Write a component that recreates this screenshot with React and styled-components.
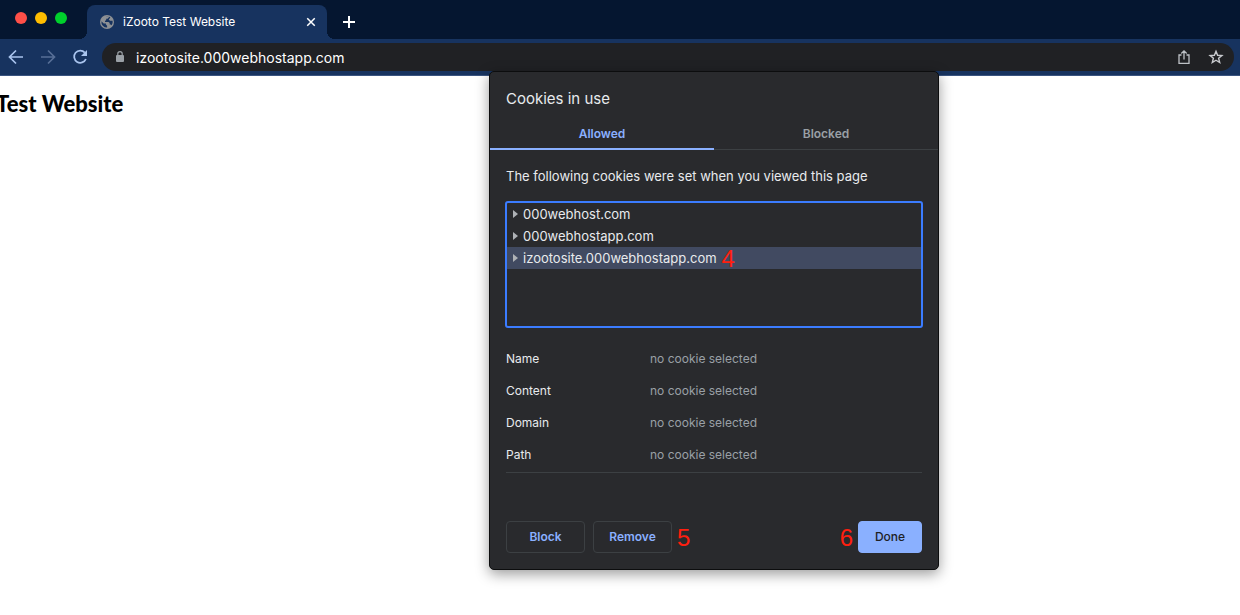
import React, { useState } from 'react';
import styled, { createGlobalStyle } from 'styled-components';

const GlobalStyle = createGlobalStyle`
  * {
    box-sizing: border-box;
  }
  body {
    margin: 0;
    background: #fff;
    font-family: Inter, 'Liberation Sans', sans-serif;
    overflow-x: hidden;
  }
  button,
  input {
    font-family: inherit;
  }
`;

const Browser = styled.div`
  position: relative;
  min-height: 100vh;
`;

const TabStrip = styled.header`
  display: flex;
  align-items: flex-end;
  height: 39px;
  background: #051630;
`;

const WindowButtons = styled.div`
  display: flex;
  align-self: flex-start;
  gap: 8px;
  width: 87px;
  padding: 12px 0 0 15px;
`;

const WindowButton = styled.button`
  width: 12px;
  height: 12px;
  padding: 0;
  border: 0;
  border-radius: 50%;
  background: ${(props) => props.$color};
`;

const BrowserTab = styled.div`
  position: relative;
  display: flex;
  align-items: center;
  width: 240px;
  height: 34px;
  padding: 0 10px 0 13px;
  border-radius: 8px 8px 0 0;
  background: #17335f;
  color: #fff;
  font-size: 12px;
  &::before,
  &::after {
    position: absolute;
    bottom: 0;
    width: 8px;
    height: 8px;
    content: '';
  }
  &::before {
    right: 100%;
    background: radial-gradient(circle at 0 0, transparent 8px, #17335f 8px);
  }
  &::after {
    left: 100%;
    background: radial-gradient(circle at 100% 0, transparent 8px, #17335f 8px);
  }
`;

const TabTitle = styled.span`
  flex: 1;
  padding-left: 9px;
  line-height: 16px;
`;

const IconButton = styled.button`
  display: flex;
  align-items: center;
  justify-content: center;
  width: ${(props) => props.$size || 16}px;
  height: ${(props) => props.$size || 16}px;
  padding: 0;
  border: 0;
  background: none;
  color: ${(props) => props.$color || '#fff'};
`;

const NewTab = styled(IconButton)`
  margin: 0 0 9px 14px;
`;

const Toolbar = styled.nav`
  display: flex;
  align-items: center;
  gap: 16px;
  height: 37px;
  padding: 0 6px 0 8px;
  border-bottom: 1px solid #3a5480;
  background: #17335f;
`;

const AddressBar = styled.div`
  display: flex;
  flex: 1;
  align-items: center;
  gap: 16px;
  height: 28px;
  margin-left: -2px;
  padding: 0 10px 0 14px;
  border-radius: 14px;
  background: #202124;
`;

const AddressField = styled.label`
  display: flex;
  flex: 1;
  align-items: center;
  gap: 12px;
`;

const AddressInput = styled.input`
  flex: 1;
  height: 20px;
  padding: 0;
  border: 0;
  outline: 0;
  background: none;
  color: #fff;
  font-size: 14px;
`;

const Page = styled.main`
  padding-top: 14px;
  overflow: hidden;
`;

const PageTitle = styled.h1`
  margin: 0 0 0 -4px;
  color: #000;
  font-family: Lato, sans-serif;
  font-size: 22px;
  font-weight: 900;
  line-height: 28px;
`;

const Dialog = styled.section`
  position: absolute;
  top: 71px;
  right: 301px;
  width: 450px;
  border: 1px solid #0c0d0e;
  border-radius: 5px;
  background: #292a2d;
  color: #e8eaed;
  box-shadow: 0 4px 14px rgba(0, 0, 0, 0.4);
`;

const DialogTitle = styled.h2`
  margin: 0;
  padding: 16px 16px 10px;
  font-size: 15px;
  font-weight: 400;
  line-height: 22px;
`;

const Tabs = styled.div`
  display: flex;
  height: 30px;
`;

const Tab = styled.button`
  flex: 1;
  padding: 0 0 2px;
  border: 0;
  background: none;
  box-shadow: inset 0 ${(props) => (props.$active ? '-2px #8ab0ff' : '-1px #3c4043')};
  color: ${(props) => (props.$active ? '#8ab0ff' : '#9aa0a6')};
  font-size: 12px;
  font-weight: 600;
  line-height: 16px;
`;

const DialogBody = styled.div`
  padding: 16px;
`;

const Intro = styled.p`
  margin: 0 0 15px;
  font-size: 13px;
  line-height: 20px;
`;

const CookieTree = styled.ul`
  height: 127px;
  margin: 0 -1px 15px;
  padding: 0;
  border: 2px solid #3b7cff;
  border-radius: 3px;
  list-style: none;
`;

const CookieItem = styled.li`
  display: flex;
  align-items: center;
  gap: 5px;
  height: 22px;
  padding-left: 6px;
  background: ${(props) => (props.$selected ? '#414a61' : 'none')};
`;

const CookieSite = styled.button`
  display: flex;
  align-items: center;
  gap: 5px;
  padding: 0;
  border: 0;
  background: none;
  color: #e8eaed;
  font-size: 13px;
  line-height: 22px;
`;

const Step = styled.span`
  padding-top: 2px;
  color: #ff1f0f;
  font-family: 'Liberation Sans', Arial, sans-serif;
  font-size: 24px;
  line-height: 22px;
`;

const Details = styled.dl`
  display: grid;
  grid-template-columns: 144px 1fr;
  margin: 0;
  padding-bottom: 1px;
  border-bottom: 1px solid #3c4043;
  font-size: 12px;
  line-height: 32px;
  dd {
    margin: 0;
    color: #9aa0a6;
  }
`;

const Actions = styled.div`
  display: flex;
  align-items: center;
  gap: 8px;
  padding-top: 48px;
`;

const StepGroup = styled.div`
  display: flex;
  flex: ${(props) => (props.$grow ? 1 : 'none')};
  align-items: center;
  gap: 5px;
`;

const ActionButton = styled.button`
  width: ${(props) => (props.$primary ? 64 : 79)}px;
  height: 32px;
  padding: 0 0 2px;
  border: 1px solid ${(props) => (props.$primary ? '#8ab0ff' : '#3c4043')};
  border-radius: 4px;
  background: ${(props) => (props.$primary ? '#8ab0ff' : 'none')};
  color: ${(props) => (props.$primary ? '#202124' : '#8ab0ff')};
  font-size: 12px;
  font-weight: ${(props) => (props.$primary ? 500 : 600)};
`;

const sites = ['000webhost.com', '000webhostapp.com', 'izootosite.000webhostapp.com'];
const fields = ['Name', 'Content', 'Domain', 'Path'];

const Stroke = ({ size = 16, width = 2, children }) => (
  <svg
    width={size}
    height={size}
    viewBox="0 0 16 16"
    fill="none"
    stroke="currentColor"
    strokeWidth={width}
    aria-hidden="true"
  >
    {children}
  </svg>
);

const Globe = () => (
  <svg width="14" height="14" viewBox="0 0 14 14" aria-hidden="true">
    <circle cx="7" cy="7" r="7" fill="#8d9094" />
    <path
      d="M1.4 6.2 3.7 8.4h2.2v1.2l1.2 1.1v1.9A5.7 5.7 0 0 1 1.4 6.2ZM6.1 1.4h2.7v1L7.5 3.7H6.2v1.2L5 6.1v.8h3.5l1.2 1.2v1.3h1l.9.9a5.6 5.6 0 0 0 1-4.5H10L8.7 4.6l1.7-2A5.6 5.6 0 0 0 6.1 1.4Z"
      fill="#17335f"
    />
  </svg>
);

const Lock = () => (
  <svg width="8" height="12" viewBox="0 0 8 12" aria-hidden="true">
    <path d="M1.8 5V2.8a2.2 2.2 0 0 1 4.4 0V5" fill="none" stroke="#9aa0a6" strokeWidth="1.2" />
    <rect y="4" width="8" height="7" rx="1" fill="#9aa0a6" />
  </svg>
);

const Arrow = () => (
  <svg width="5" height="8" viewBox="0 0 5 8" aria-hidden="true">
    <path d="M0 0 5 4 0 8Z" fill="#aeb1b5" />
  </svg>
);

function App() {
  const [address, setAddress] = useState('izootosite.000webhostapp.com');
  const [tab, setTab] = useState('Allowed');
  const [selected, setSelected] = useState(sites[2]);

  return (
    <>
      <GlobalStyle />
      <Browser>
        <TabStrip>
          <WindowButtons>
            <WindowButton $color="#ff4f48" aria-label="Close window" />
            <WindowButton $color="#ffbd00" aria-label="Minimize window" />
            <WindowButton $color="#00d02c" aria-label="Zoom window" />
          </WindowButtons>
          <BrowserTab>
            <Globe />
            <TabTitle>iZooto Test Website</TabTitle>
            <IconButton $size={12} aria-label="Close tab">
              <Stroke size={12}>
                <path d="M3 3l10 10M13 3 3 13" />
              </Stroke>
            </IconButton>
          </BrowserTab>
          <NewTab aria-label="New tab">
            <Stroke>
              <path d="M8 2v12M2 8h12" />
            </Stroke>
          </NewTab>
        </TabStrip>

        <Toolbar>
          <IconButton $color="#a9c4ee" aria-label="Back">
            <Stroke width={1.7}>
              <path d="M15 8H2M8 1.5 1.5 8 8 14.5" />
            </Stroke>
          </IconButton>
          <IconButton $color="#576f97" aria-label="Forward">
            <Stroke width={1.7}>
              <path d="M1 8h13M8 1.5 14.5 8 8 14.5" />
            </Stroke>
          </IconButton>
          <IconButton $color="#a9c4ee" aria-label="Reload">
            <Stroke width={1.8}>
              <path d="M12.8 3.6A6.1 6.1 0 1 0 13.9 10" />
              <path d="M15 1v6H9Z" fill="currentColor" stroke="none" />
            </Stroke>
          </IconButton>
          <AddressBar>
            <AddressField>
              <Lock />
              <AddressInput
                aria-label="Address"
                value={address}
                onChange={(e) => setAddress(e.target.value)}
              />
            </AddressField>
            <IconButton $color="#bdc1c6" aria-label="Share">
              <Stroke width={1.3}>
                <path d="M5.5 6H3v8.3h10V6h-2.5M8 10.5V2M5.3 4.5 8 1.8l2.7 2.7" />
              </Stroke>
            </IconButton>
            <IconButton $color="#c8cace" aria-label="Bookmark">
              <Stroke width={1.4}>
                <path d="m8 2.3 1.6 4 4.3.3-3.3 2.7 1.1 4.2L8 11.2l-3.7 2.3 1.1-4.2-3.3-2.7 4.3-.3Z" />
              </Stroke>
            </IconButton>
          </AddressBar>
        </Toolbar>

        <Page>
          <PageTitle>Test Website</PageTitle>
        </Page>

        <Dialog role="dialog" aria-labelledby="cookies-title">
          <DialogTitle id="cookies-title">Cookies in use</DialogTitle>
          <Tabs role="tablist">
            {['Allowed', 'Blocked'].map((name) => (
              <Tab
                key={name}
                role="tab"
                aria-selected={tab === name}
                $active={tab === name}
                onClick={() => setTab(name)}
              >
                {name}
              </Tab>
            ))}
          </Tabs>
          <DialogBody>
            <Intro>The following cookies were set when you viewed this page</Intro>
            <CookieTree>
              {sites.map((site, i) => (
                <CookieItem key={site} $selected={selected === site}>
                  <CookieSite onClick={() => setSelected(site)}>
                    <Arrow />
                    {site}
                  </CookieSite>
                  {i === 2 && <Step>4</Step>}
                </CookieItem>
              ))}
            </CookieTree>
            <Details>
              {fields.map((field) => (
                <React.Fragment key={field}>
                  <dt>{field}</dt>
                  <dd>no cookie selected</dd>
                </React.Fragment>
              ))}
            </Details>
            <Actions>
              <ActionButton>Block</ActionButton>
              <StepGroup $grow>
                <ActionButton>Remove</ActionButton>
                <Step>5</Step>
              </StepGroup>
              <StepGroup>
                <Step>6</Step>
                <ActionButton $primary>Done</ActionButton>
              </StepGroup>
            </Actions>
          </DialogBody>
        </Dialog>
      </Browser>
    </>
  );
}

export default App;
